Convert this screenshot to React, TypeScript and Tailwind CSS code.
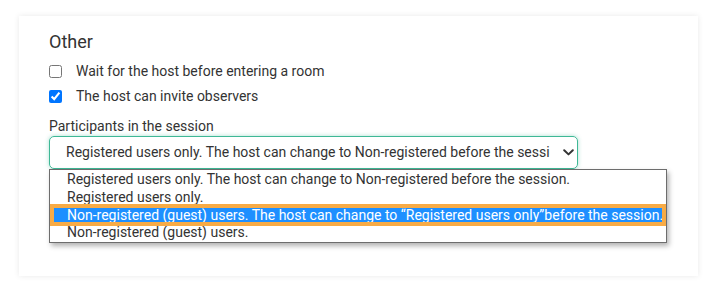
import React from 'react';

const options = [
  'Registered users only. The host can change to Non-registered before the session.',
  'Registered users only.',
  'Non-registered (guest) users. The host can change to \u201cRegistered users only\u201dbefore the session.',
  'Non-registered (guest) users.',
];

const ChevronDown = () => (
  <svg width="11" height="7" viewBox="0 0 11 7" className="text-[#333]">
    <path d="M1.2 1.2 L5.5 5.4 L9.8 1.2" fill="none" stroke="currentColor" strokeWidth="2" strokeLinecap="round" strokeLinejoin="round" />
  </svg>
);

const App: React.FC = () => {
  return (
    <div className="w-[717px] h-[292px] bg-white pt-[16px] pl-[19px] font-['Roboto','Liberation_Sans',sans-serif] text-[#333]">
      <div className="w-[679px] h-[260px] bg-white shadow-[0_0_6px_rgba(0,0,0,0.09)] pt-[14px] pl-[30px]">
        <h3 className="text-[18px] leading-[24px] font-normal text-[#333]">Other</h3>

        <label className="flex items-center h-[20px] mt-[7px] text-[14px]">
          <input type="checkbox" className="m-0 w-[13px] h-[13px]" />
          <span className="ml-[14px]">Wait for the host before entering a room</span>
        </label>
        <label className="flex items-center h-[20px] mt-[5px] text-[14px]">
          <input type="checkbox" defaultChecked className="m-0 w-[13px] h-[13px] accent-[#0075ff]" />
          <span className="ml-[14px]">The host can invite observers</span>
        </label>

        <div className="mt-[10px] text-[14px] leading-[20px]">Participants in the session</div>

        <div className="relative w-[529px]">
          <div className="flex items-center h-[33px] rounded-[5px] border border-[#3fb896] shadow-[0_0_4px_rgba(63,184,150,0.45)] pl-[16px] pr-[3px]">
            <span className="flex-1 overflow-hidden whitespace-nowrap text-[14px] text-[#333]">{options[0]}</span>
            <span className="ml-[13px] flex items-center"><ChevronDown /></span>
          </div>

          <ul className="absolute left-0 top-[33px] w-[618px] bg-white border border-[#6d6d6d] shadow-[2px_3px_5px_rgba(0,0,0,0.3)] py-[1px] text-[14px] leading-[17.5px] text-[#333]">
            {options.map((opt, i) =>
              i === 2 ? (
                <li key={i} className="h-[17.5px] py-[1.5px] px-[4px]">
                  <div className="h-[14.5px] bg-[#1e8fff] text-white pl-[13px] leading-[14.5px] whitespace-nowrap outline-[4px] outline-solid outline-[#f8ab45]">
                    {opt}
                  </div>
                </li>
              ) : (
                <li key={i} className="h-[17.5px] pl-[17px] whitespace-nowrap">
                  {opt}
                </li>
              )
            )}
          </ul>
        </div>
      </div>
    </div>
  );
};

export default App;
